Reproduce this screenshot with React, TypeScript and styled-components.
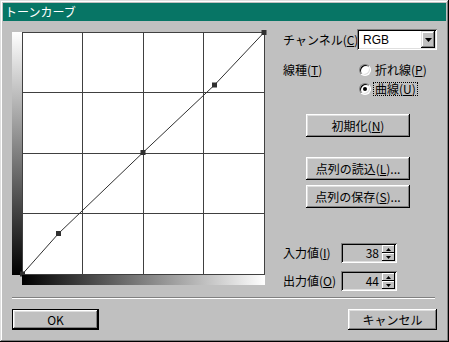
import React from "react";
import styled, { createGlobalStyle } from "styled-components";

const Global = createGlobalStyle`
  html, body { margin: 0; padding: 0; background: #c0c0c0; }
  body { font-family: "Noto Sans CJK JP", "Liberation Sans", sans-serif; font-size: 12px; color: #000; }
  * { box-sizing: border-box; }
`;

const Window = styled.div`
  width: 449px;
  height: 342px;
  padding: 3px;
  background: #c0c0c0;
  box-shadow: inset -1px -1px #000, inset 1px 1px #dfdfdf, inset -2px -2px #808080, inset 2px 2px #fff;
  display: flex;
  flex-direction: column;
`;

const TitleBar = styled.div`
  height: 18px;
  background: #077565;
  color: #fff;
  font-size: 12px;
  line-height: 18px;
  padding-left: 2px;
  display: flex;
  align-items: center;
`;

const Content = styled.div`
  padding: 8px 9px 0 9px;
  display: flex;
  flex-direction: column;
`;

const Main = styled.div`
  height: 268px;
  display: flex;
  gap: 18px;
`;

const CurvePanel = styled.div`
  margin-top: 3px;
  display: grid;
  grid-template-columns: 10px 243px;
  grid-template-rows: 243px 10px;
  width: 253px;
  height: 253px;
`;

const VGradient = styled.div`
  background: linear-gradient(to bottom, #ffffff, #000000);
`;

const HGradient = styled.div`
  grid-column: 2;
  grid-row: 2;
  background: linear-gradient(to right, #000000, #ffffff);
`;

const Plot = styled.svg`
  display: block;
  overflow: visible;
  background: #fff;
`;

const Controls = styled.div`
  width: 154px;
  display: flex;
  flex-direction: column;
`;

const Row = styled.div<{ $mt?: number; $h?: number }>`
  display: flex;
  align-items: center;
  margin-top: ${(p) => p.$mt ?? 0}px;
  height: ${(p) => (p.$h ? `${p.$h}px` : "auto")};
`;

const Label = styled.span<{ $w: number }>`
  width: ${(p) => p.$w}px;
  flex: none;
  font-size: 12px;
  line-height: 14px;
  white-space: nowrap;
  u { text-decoration: underline; text-underline-offset: 1px; }
`;

const Select = styled.div`
  width: 80px;
  height: 21px;
  background: #fff;
  box-shadow: inset 1px 1px #808080, inset -1px -1px #fff, inset 2px 2px #000, inset -2px -2px #dfdfdf;
  display: flex;
  align-items: center;
  padding: 2px;
`;

const SelectText = styled.span`
  flex: 1;
  padding-left: 4px;
  font-family: "Liberation Sans", sans-serif;
  font-size: 12px;
  line-height: 14px;
`;

const DropButton = styled.div`
  width: 14px;
  height: 17px;
  background: #c0c0c0;
  box-shadow: inset -1px -1px #000, inset 1px 1px #dfdfdf, inset -2px -2px #808080, inset 2px 2px #fff;
  display: flex;
  align-items: center;
  justify-content: center;
`;

const LineTypeBlock = styled.div`
  display: flex;
  margin-top: 10px;
`;

const LineTypeLabel = styled(Label)`
  height: 19px;
  line-height: 19px;
`;

const RadioGroup = styled.div`
  display: flex;
  flex-direction: column;
`;

const RadioRow = styled.div`
  height: 19px;
  display: flex;
  align-items: center;
`;

const RadioCircle = styled.span<{ $checked?: boolean }>`
  width: 12px;
  height: 12px;
  border-radius: 50%;
  background: #fff;
  border: 1px solid;
  border-color: #808080 #fff #fff #808080;
  box-shadow: inset 1px 1px #000, inset -1px -1px #dfdfdf;
  display: flex;
  align-items: center;
  justify-content: center;
  flex: none;
  &::after {
    content: "";
    width: 4px;
    height: 4px;
    border-radius: 50%;
    background: ${(p) => (p.$checked ? "#000" : "transparent")};
  }
`;

const RadioText = styled.span<{ $focus?: boolean }>`
  margin-left: 2px;
  padding: 0 1px;
  border: 1px dotted ${(p) => (p.$focus ? "#000" : "transparent")};
  font-size: 12px;
  line-height: 12px;
  white-space: nowrap;
  u { text-decoration: underline; text-underline-offset: 1px; }
`;

const Button = styled.button<{ $w: number; $h: number; $mt?: number; $ml?: number; $default?: boolean }>`
  width: ${(p) => p.$w}px;
  height: ${(p) => p.$h}px;
  margin-top: ${(p) => p.$mt ?? 0}px;
  margin-left: ${(p) => p.$ml ?? 0}px;
  padding: 0;
  background: #c0c0c0;
  color: #000;
  font-family: "Noto Sans CJK JP", sans-serif;
  font-size: 12px;
  line-height: 14px;
  border: ${(p) => (p.$default ? "1px solid #000" : "none")};
  box-shadow: inset -1px -1px #000, inset 1px 1px #fff, inset -2px -2px #808080, inset 2px 2px #dfdfdf;
  display: flex;
  align-items: center;
  justify-content: center;
  flex: none;
  u { text-decoration: underline; text-underline-offset: 1px; }
`;

const SpinBox = styled.div`
  width: 56px;
  height: 20px;
  background: #c0c0c0;
  box-shadow: inset 1px 1px #808080, inset -1px -1px #fff, inset 2px 2px #000, inset -2px -2px #dfdfdf;
  padding: 2px;
  display: flex;
`;

const SpinValue = styled.span`
  flex: 1;
  text-align: right;
  padding-right: 3px;
  font-size: 12px;
  line-height: 16px;
`;

const SpinButtons = styled.div`
  width: 13px;
  display: flex;
  flex-direction: column;
`;

const SpinButton = styled.div`
  flex: 1;
  background: #c0c0c0;
  box-shadow: inset -1px -1px #000, inset 1px 1px #fff;
  display: flex;
  align-items: center;
  justify-content: center;
`;

const Separator = styled.div`
  height: 2px;
  margin-right: 2px;
  border-top: 1px solid #808080;
  border-bottom: 1px solid #fff;
`;

const Footer = styled.div`
  margin-top: 10px;
  display: flex;
  justify-content: space-between;
`;

const gridLines = [0.5, 60.5, 121.5, 181.5, 242.5];
const points: [number, number][] = [
  [0.5, 242],
  [36.5, 201.5],
  [121, 120.5],
  [192.5, 53],
  [242, 0.5],
];

function CurvePlot() {
  return (
    <Plot width={243} height={243} viewBox="0 0 243 243">
      {gridLines.map((v) => (
        <line key={"v" + v} x1={v} y1={0} x2={v} y2={243} stroke="#404040" strokeWidth={1} />
      ))}
      {gridLines.map((v) => (
        <line key={"h" + v} x1={0} y1={v} x2={243} y2={v} stroke="#404040" strokeWidth={1} />
      ))}
      <polyline
        points={points.map((p) => p.join(",")).join(" ")}
        fill="none"
        stroke="#303030"
        strokeWidth={1}
      />
      {points.map(([x, y], i) => (
        <rect key={i} x={x - 2.5} y={y - 2.5} width={5} height={5} fill="#303030" />
      ))}
    </Plot>
  );
}

function TriDown() {
  return (
    <svg width="7" height="4" viewBox="0 0 7 4">
      <path d="M0 0H7L3.5 4Z" fill="#000" />
    </svg>
  );
}

function SmallTri({ up }: { up?: boolean }) {
  return (
    <svg width="5" height="3" viewBox="0 0 5 3">
      <path d={up ? "M2.5 0L5 3H0Z" : "M0 0H5L2.5 3Z"} fill="#000" />
    </svg>
  );
}

function Spin({ value }: { value: string }) {
  return (
    <SpinBox>
      <SpinValue>{value}</SpinValue>
      <SpinButtons>
        <SpinButton>
          <SmallTri up />
        </SpinButton>
        <SpinButton>
          <SmallTri />
        </SpinButton>
      </SpinButtons>
    </SpinBox>
  );
}

export default function App() {
  return (
    <>
      <Global />
      <Window>
        <TitleBar>トーンカーブ</TitleBar>
        <Content>
          <Main>
            <CurvePanel>
              <VGradient />
              <CurvePlot />
              <HGradient />
            </CurvePanel>
            <Controls>
              <Row $h={21}>
                <Label $w={74}>
                  チャンネル(<u>C</u>)
                </Label>
                <Select>
                  <SelectText>RGB</SelectText>
                  <DropButton>
                    <TriDown />
                  </DropButton>
                </Select>
              </Row>
              <LineTypeBlock>
                <LineTypeLabel $w={76}>
                  線種(<u>T</u>)
                </LineTypeLabel>
                <RadioGroup>
                  <RadioRow>
                    <RadioCircle />
                    <RadioText>
                      折れ線(<u>P</u>)
                    </RadioText>
                  </RadioRow>
                  <RadioRow>
                    <RadioCircle $checked />
                    <RadioText $focus>
                      曲線(<u>U</u>)
                    </RadioText>
                  </RadioRow>
                </RadioGroup>
              </LineTypeBlock>
              <Button $w={104} $h={23} $mt={16} $ml={23}>
                初期化(<u>N</u>)
              </Button>
              <Button $w={104} $h={23} $mt={20} $ml={23}>
                点列の読込(<u>L</u>)...
              </Button>
              <Button $w={104} $h={23} $mt={5} $ml={23}>
                点列の保存(<u>S</u>)...
              </Button>
              <Row $mt={35}>
                <Label $w={58}>
                  入力値(<u>I</u>)
                </Label>
                <Spin value="38" />
              </Row>
              <Row $mt={8}>
                <Label $w={58}>
                  出力値(<u>O</u>)
                </Label>
                <Spin value="44" />
              </Row>
            </Controls>
          </Main>
          <Separator />
          <Footer>
            <Button $w={87} $h={21} $default>
              OK
            </Button>
            <Button $w={89} $h={21}>
              キャンセル
            </Button>
          </Footer>
        </Content>
      </Window>
    </>
  );
}
